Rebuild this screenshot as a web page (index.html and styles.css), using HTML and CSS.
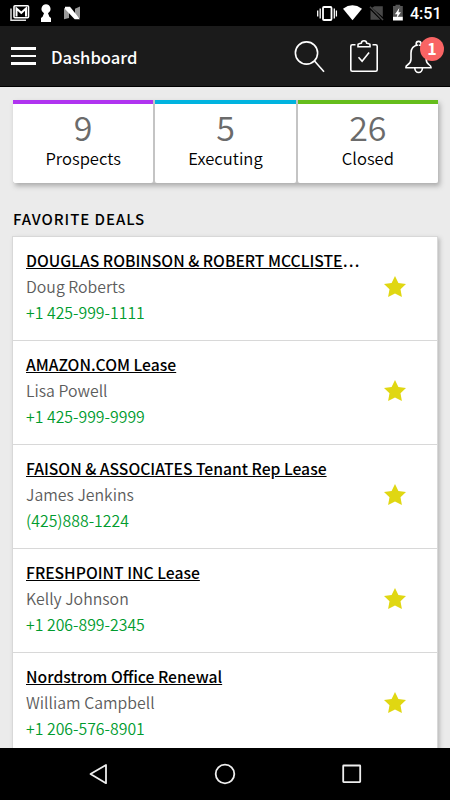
FILE: index.html
```html
<!DOCTYPE html>
<html lang="en">
<head>
<meta charset="utf-8">
<title>Dashboard</title>
<link rel="stylesheet" href="styles.css">
</head>
<body>
<div class="statusbar">
  <svg class="status-left" width="90" height="26" viewBox="0 0 90 26">
    <path d="M11 8.5V20.2H26" fill="none" stroke="#ddd" stroke-width="1.5"/>
    <rect x="14" y="5.7" width="14.5" height="12" rx="1" fill="none" stroke="#fff" stroke-width="1.6"/>
    <path d="M16.5 16.5V8.5L21.3 12.8L26 8.5V16.5" fill="none" stroke="#fff" stroke-width="2"/>
    <path d="M46 4.3a4.6 4.6 0 0 1 3 8l-1 1 1.4 3.4 1.6 1.3v3.9H41v-3.9l1.6-1.3L44 13.3l-1-1A4.6 4.6 0 0 1 46 4.3z" fill="#fff"/>
    <path d="M64 8l5 2v8l-5 1.3zM75 8.7l5-2.2v11.6l-5-1z" fill="#999"/>
    <path d="M65 6.8h5l10 12.5h-5.3L65 9z" fill="#fff"/>
  </svg>
  <svg class="status-right" width="94" height="26" viewBox="0 0 94 26">
    <rect x="7" y="7" width="8.5" height="13" rx="1" fill="none" stroke="#fff" stroke-width="1.8"/>
    <path d="M4.2 8.5v10M1.7 10.5v6M18.3 8.5v10M20.4 10.5v6" stroke="#fff" stroke-width="1.3"/>
    <path d="M27 8.7Q36.4 1.9 46 8.7L36.5 20.2z" fill="#fff"/>
    <path d="M58.5 6.2h8.3v10.8L56 7.8zM54.5 10l9.8 9.7h-9.8z" fill="#484848"/>
    <path d="M54 6.8L67 20" stroke="#484848" stroke-width="1.5"/>
    <path d="M77 6h2.5V4.7h4.7V6h2.6v11H77z" fill="#555"/>
    <path d="M77 16.8h9.8v3.7H77z" fill="#fff"/>
    <path d="M83.3 8l-4.4 6.2h2.4l-.8 4.2 4.4-6.1h-2.4z" fill="#fff"/>
  </svg>
  <span class="clock">4:51</span>
</div>
<header class="appbar">
  <div class="menu"><i></i><i></i><i></i></div>
  <h1>Dashboard</h1>
  <div class="actions">
    <svg width="32" height="34" viewBox="0 0 32 34" fill="none" stroke="#fff" stroke-width="1.6"><circle cx="12.5" cy="13" r="11.1"/><path d="M20.5 21L30 31.8"/></svg>
    <svg width="28" height="34" viewBox="0 0 28 34" fill="none" stroke="#fff" stroke-width="1.6"><path d="M5.5 4.7H2.3Q.8 4.7.8 6.2V29.8Q.8 31.3 2.3 31.3H25.7Q27.2 31.3 27.2 29.8V6.2Q27.2 4.7 25.7 4.7H22.5M8 6.8V4.8Q8 3.8 9 3.7L11.3 3.2Q11.5.8 14 .8Q16.5.8 16.7 3.2L19 3.7Q20 3.8 20 4.8V6.8z"/><path d="M8.5 17.3l3.6 3.9 7-8.6"/></svg>
    <div class="bell">
      <svg width="28" height="34" viewBox="0 0 28 34" fill="none" stroke="#fff" stroke-width="1.6"><path d="M13 5C8.2 5.8 6 8.7 6 13V19Q6 22.6 2.5 25Q.6 26.2 1 27.8H26Q26.2 26.1 24 24.7Q21.2 22.7 21.2 19V13C21.2 8.7 18 5.6 13.7 5"/><path d="M11.2 5.2V3.8a2.4 2.4 0 0 1 4.8 0V5.2M9.8 28a3.8 4.5 0 0 0 7.6 0"/></svg>
      <span class="badge">1</span>
    </div>
  </div>
</header>
<main>
  <section class="stats">
    <div class="stat purple"><b>9</b><span>Prospects</span></div>
    <div class="stat blue"><b>5</b><span>Executing</span></div>
    <div class="stat green"><b>26</b><span>Closed</span></div>
  </section>
  <h2>FAVORITE DEALS</h2>
  <section class="deals">
    <article><div class="info"><h3><a>DOUGLAS ROBINSON &amp; ROBERT MCCLISTE</a>…</h3><p>Doug Roberts</p><p class="phone">+1 425-999-1111</p></div><svg class="star" viewBox="0 0 22 21"><path d="M11 0l3.4 6.9 7.6 1-5.5 5.3 1.4 7.8L11 17.4 4.1 21l1.4-7.8L0 7.9l7.6-1z"/></svg></article>
    <article><div class="info"><h3><a>AMAZON.COM Lease</a></h3><p>Lisa Powell</p><p class="phone">+1 425-999-9999</p></div><svg class="star" viewBox="0 0 22 21"><path d="M11 0l3.4 6.9 7.6 1-5.5 5.3 1.4 7.8L11 17.4 4.1 21l1.4-7.8L0 7.9l7.6-1z"/></svg></article>
    <article><div class="info"><h3><a>FAISON &amp; ASSOCIATES Tenant Rep Lease</a></h3><p>James Jenkins</p><p class="phone">(425)888-1224</p></div><svg class="star" viewBox="0 0 22 21"><path d="M11 0l3.4 6.9 7.6 1-5.5 5.3 1.4 7.8L11 17.4 4.1 21l1.4-7.8L0 7.9l7.6-1z"/></svg></article>
    <article><div class="info"><h3><a>FRESHPOINT INC Lease</a></h3><p>Kelly Johnson</p><p class="phone">+1 206-899-2345</p></div><svg class="star" viewBox="0 0 22 21"><path d="M11 0l3.4 6.9 7.6 1-5.5 5.3 1.4 7.8L11 17.4 4.1 21l1.4-7.8L0 7.9l7.6-1z"/></svg></article>
    <article><div class="info"><h3><a>Nordstrom Office Renewal</a></h3><p>William Campbell</p><p class="phone">+1 206-576-8901</p></div><svg class="star" viewBox="0 0 22 21"><path d="M11 0l3.4 6.9 7.6 1-5.5 5.3 1.4 7.8L11 17.4 4.1 21l1.4-7.8L0 7.9l7.6-1z"/></svg></article>
  </section>
</main>
<nav class="navbar">
  <svg width="450" height="52" viewBox="0 0 450 52" fill="none" stroke="#eee" stroke-width="1.8" stroke-linejoin="round"><path d="M106 17v18.2L90.5 26z"/><circle cx="225" cy="26" r="9.3"/><rect x="343.2" y="17.5" width="17" height="16.6" rx=".5"/></svg>
</nav>
</body>
</html>
```
FILE: styles.css
```css
* { box-sizing: border-box; }
body {
  margin: 0;
  width: 450px;
  height: 800px;
  overflow: hidden;
  display: flex;
  flex-direction: column;
  background: #ebebeb;
  color: #000;
  font-family: "Noto Sans CJK SC", "Noto Sans", sans-serif;
}
svg { display: block; flex: none; }
h1, h2, h3, p { margin: 0; }
.statusbar {
  flex: none;
  height: 26px;
  background: #000;
  display: flex;
  align-items: center;
}
.status-right { margin-left: 226px; }
.clock {
  color: #fff;
  font: 500 16px/26px Roboto, sans-serif;
  padding-top: 2px;
}
.appbar {
  flex: none;
  height: 61px;
  background: #1b1b1b;
  border-bottom: 1px solid #000;
  display: flex;
  align-items: center;
  padding: 0 17px 0 11px;
}
.menu { display: grid; gap: 5px; width: 25px; }
.menu i { height: 2.5px; background: #fff; }
h1 {
  margin-left: 15px;
  padding-top: 1px;
  color: #fff;
  font-size: 16.6px;
  line-height: 26px;
  font-weight: 500;
}
.actions { display: flex; gap: 26px; margin-left: auto; padding-top: 2px; }
.actions > svg:first-child { margin-right: -2px; }
.bell { position: relative; margin-left: 1px; width: 28px; }
.badge {
  position: absolute;
  left: 15px;
  top: -3px;
  width: 24px;
  height: 24px;
  border-radius: 50%;
  background: #f96464;
  color: #fff;
  font: 700 16px/23px "Noto Sans CJK SC", sans-serif;
  text-align: center;
}
main {
  flex: 1;
  min-height: 0;
  overflow: hidden;
  padding: 13px 12px 0;
}
.stats {
  display: grid;
  grid-template-columns: repeat(3, 1fr);
  gap: 2px;
  height: 83px;
  margin-left: 1px;
  background: #c4c4c4;
  box-shadow: 2px 3px 5px #aaa;
}
.stat {
  background: #fff;
  border-top: 4px solid;
  border-radius: 0 0 2px 2px;
  text-align: center;
}
.purple { border-color: #b034f0; }
.blue { border-color: #00b3df; }
.green { border-color: #65bd1c; }
.stat b {
  display: block;
  color: #6b6b6b;
  font-size: 34px;
  font-weight: 350;
  line-height: 36px;
  padding-top: 5px;
}
.stat span {
  display: block;
  color: #000;
  font-size: 16.6px;
  font-weight: 350;
  line-height: 24px;
  margin-top: 1px;
}
h2 {
  margin: 23px 0 0 1px;
  font-size: 15px;
  font-weight: 500;
  line-height: 26px;
  letter-spacing: .95px;
}
.deals {
  margin-top: 4px;
  background: #fff;
  border: 1px solid #d8d8d8;
  box-shadow: 2px 2px 4px #bbb;
}
article {
  height: 104px;
  display: flex;
  justify-content: space-between;
  padding: 11px 31px 0 13px;
  border-bottom: 1px solid #d8d8d8;
}
h3, p {
  font-size: 15.85px;
  line-height: 26px;
  white-space: nowrap;
}
h3 { font-size: 15.7px; font-weight: 500; }
h3 a { text-decoration: underline; }
p { color: #5c5c5c; font-weight: 350; }
.phone { color: #009b2e; }
.star { width: 22px; height: 21px; margin-top: 28px; fill: #e0d712; }
.navbar { flex: none; height: 52px; background: #000; }
```
